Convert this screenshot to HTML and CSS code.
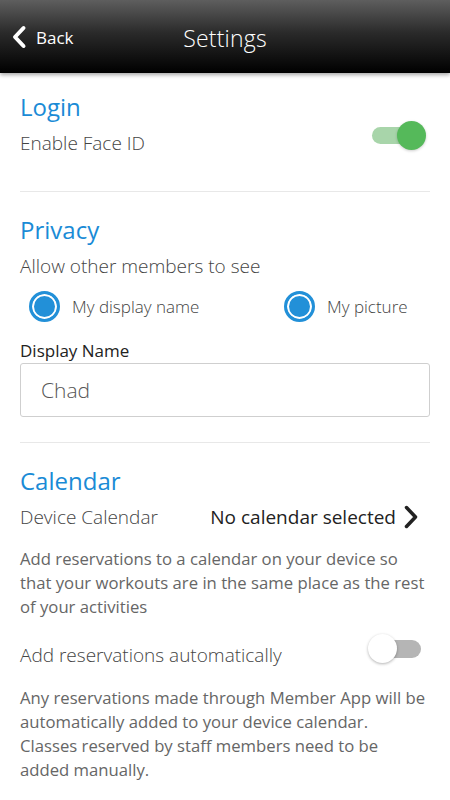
FILE: index.html
```html
<!DOCTYPE html>
<html lang="en">
<head>
    <meta charset="UTF-8">
    <meta name="viewport" content="width=device-width, initial-scale=1.0">
    <title>Settings</title>
    <link rel="stylesheet" href="styles.css">
</head>
<body>
<div class="topbar">
    <div class="back">
        <svg width="16" height="24" viewBox="0 0 16 24"><path d="M12.5 3 L4 12 L12.5 21" fill="none" stroke="#fff" stroke-width="4" stroke-linecap="round" stroke-linejoin="round"/></svg>
        <span>Back</span>
    </div>
    <div class="title">Settings</div>
</div>

<div class="content">
    <div class="section">
        <h2>Login</h2>
        <div class="row">
            <span class="label">Enable Face ID</span>
            <div class="toggle on"><div class="knob"></div></div>
        </div>
    </div>

    <div class="section">
        <h2>Privacy</h2>
        <div class="label sub">Allow other members to see</div>
        <div class="radios">
            <label class="radio"><span class="dot"></span>My display name</label>
            <label class="radio"><span class="dot"></span>My picture</label>
        </div>
        <div class="field-label">Display Name</div>
        <div class="field">Chad</div>
    </div>

    <div class="section last">
        <h2>Calendar</h2>
        <div class="row">
            <span class="label">Device Calendar</span>
            <span class="picker">No calendar selected
                <svg width="16" height="24" viewBox="0 0 16 24"><path d="M3.5 2.5 L12.5 12 L3.5 21.5" fill="none" stroke="#222" stroke-width="3.5" stroke-linecap="round" stroke-linejoin="round"/></svg>
            </span>
        </div>
        <p class="note">Add reservations to a calendar on your device so that your workouts are in the same place as the rest of your activities</p>
        <div class="row auto">
            <span class="label">Add reservations automatically</span>
            <div class="toggle off"><div class="knob"></div></div>
        </div>
        <p class="note second">Any reservations made through Member App will be automatically added to your device calendar.<br>Classes reserved by staff members need to be added manually.</p>
    </div>
</div>
</body>
</html>
```

FILE: styles.css
```css
body {
    margin: 0;
    font-family: "Open Sans", "Noto Sans", sans-serif;
    background: #fff;
    color: #444;
}
.topbar {
    height: 73px;
    background: linear-gradient(#5e5e5e, #2a2a2a 45%, #000);
    box-shadow: 0 2px 4px rgba(0, 0, 0, 0.35);
    display: flex;
    align-items: center;
    justify-content: center;
    position: relative;
    color: #fff;
}
.back {
    position: absolute;
    left: 11px;
    top: 25px;
    display: flex;
    align-items: center;
    gap: 9px;
    font-size: 17px;
}
.title {
    font-size: 23px;
    font-weight: 300;
    letter-spacing: 0.2px;
    margin-top: 2px;
}
.content {
    padding: 0 20px;
}
.section {
    border-bottom: 1px solid #e8e8e8;
    padding: 22px 0 25px;
}
.section:first-child {
    padding: 18px 0 35px;
}
.section.last {
    border-bottom: none;
}
h2 {
    margin: 0;
    font-size: 24px;
    font-weight: 400;
    color: #1a8bd6;
    line-height: 32px;
}
.label {
    font-size: 19px;
    font-weight: 300;
    color: #444;
    line-height: 26px;
}
.label.sub {
    margin-top: 7px;
}
.row {
    display: flex;
    justify-content: space-between;
    align-items: flex-start;
    margin-top: 7px;
}
.toggle {
    height: 17px;
    border-radius: 9px;
    position: relative;
}
.toggle .knob {
    position: absolute;
    top: -6px;
    width: 29px;
    height: 29px;
    border-radius: 50%;
}
.toggle.on {
    width: 40px;
    background: #a8d5aa;
    margin: -3px 18px 0 0;
}
.toggle.on .knob {
    right: -14px;
    background: #55b95a;
    box-shadow: 0 1px 3px rgba(0, 0, 0, 0.2);
}
.toggle.off {
    background: #b5b5b5;
    width: 38px;
    height: 18px;
    margin: -2px 9px 0 0;
}
.toggle.off .knob {
    left: -15px;
    top: -6px;
    background: #fff;
    box-shadow: 0 1px 3px rgba(0, 0, 0, 0.3);
}
.radios {
    display: grid;
    grid-template-columns: 255px 1fr;
    margin: 11px 0 0 9px;
}
.radio {
    display: flex;
    align-items: center;
    gap: 12px;
    height: 32px;
    font-size: 17px;
    font-weight: 300;
    color: #444;
}
.dot {
    width: 25px;
    height: 25px;
    border-radius: 50%;
    border: 3px solid #2290d8;
    background: #2290d8;
    box-shadow: inset 0 0 0 2px #fff;
}
.field-label {
    margin-top: 18px;
    font-size: 17px;
    color: #222;
    line-height: 22px;
}
.field {
    margin-top: 1px;
    height: 52px;
    border: 1px solid #cfcfcf;
    border-radius: 3px;
    padding-left: 20px;
    display: flex;
    align-items: center;
    font-size: 21px;
    font-weight: 300;
    color: #555;
}
.picker {
    display: flex;
    align-items: center;
    gap: 7px;
    font-size: 19px;
    line-height: 26px;
    color: #222;
    margin-right: 11px;
}
.note {
    margin: 17px 0 0;
    font-size: 16.7px;
    line-height: 24px;
    color: #666;
}
.note.second {
    margin-top: 18px;
}
.row.auto {
    margin-top: 23px;
}
```
